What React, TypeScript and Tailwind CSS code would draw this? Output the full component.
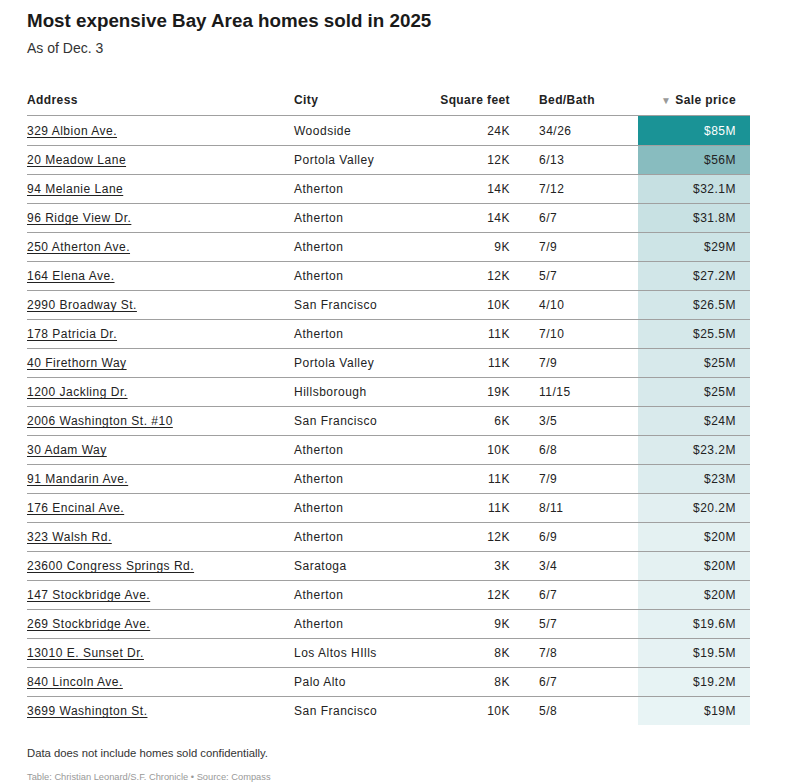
import { FC } from "react";

type Home = {
  address: string;
  city: string;
  sqft: string;
  bedBath: string;
  price: string;
  cell: string;
};

const homes: Home[] = [
  { address: "329 Albion Ave.", city: "Woodside", sqft: "24K", bedBath: "34/26", price: "$85M", cell: "bg-[#1a9396] text-white" },
  { address: "20 Meadow Lane", city: "Portola Valley", sqft: "12K", bedBath: "6/13", price: "$56M", cell: "bg-[#88bcbf]" },
  { address: "94 Melanie Lane", city: "Atherton", sqft: "14K", bedBath: "7/12", price: "$32.1M", cell: "bg-[#c6e0e2]" },
  { address: "96 Ridge View Dr.", city: "Atherton", sqft: "14K", bedBath: "6/7", price: "$31.8M", cell: "bg-[#c8e1e3]" },
  { address: "250 Atherton Ave.", city: "Atherton", sqft: "9K", bedBath: "7/9", price: "$29M", cell: "bg-[#cde4e6]" },
  { address: "164 Elena Ave.", city: "Atherton", sqft: "12K", bedBath: "5/7", price: "$27.2M", cell: "bg-[#d1e6e8]" },
  { address: "2990 Broadway St.", city: "San Francisco", sqft: "10K", bedBath: "4/10", price: "$26.5M", cell: "bg-[#d3e7e9]" },
  { address: "178 Patricia Dr.", city: "Atherton", sqft: "11K", bedBath: "7/10", price: "$25.5M", cell: "bg-[#d5e8ea]" },
  { address: "40 Firethorn Way", city: "Portola Valley", sqft: "11K", bedBath: "7/9", price: "$25M", cell: "bg-[#d7e9eb]" },
  { address: "1200 Jackling Dr.", city: "Hillsborough", sqft: "19K", bedBath: "11/15", price: "$25M", cell: "bg-[#d7e9eb]" },
  { address: "2006 Washington St. #10", city: "San Francisco", sqft: "6K", bedBath: "3/5", price: "$24M", cell: "bg-[#d9eaec]" },
  { address: "30 Adam Way", city: "Atherton", sqft: "10K", bedBath: "6/8", price: "$23.2M", cell: "bg-[#dbebed]" },
  { address: "91 Mandarin Ave.", city: "Atherton", sqft: "11K", bedBath: "7/9", price: "$23M", cell: "bg-[#dcecee]" },
  { address: "176 Encinal Ave.", city: "Atherton", sqft: "11K", bedBath: "8/11", price: "$20.2M", cell: "bg-[#e2eff1]" },
  { address: "323 Walsh Rd.", city: "Atherton", sqft: "12K", bedBath: "6/9", price: "$20M", cell: "bg-[#e4f1f2]" },
  { address: "23600 Congress Springs Rd.", city: "Saratoga", sqft: "3K", bedBath: "3/4", price: "$20M", cell: "bg-[#e4f1f2]" },
  { address: "147 Stockbridge Ave.", city: "Atherton", sqft: "12K", bedBath: "6/7", price: "$20M", cell: "bg-[#e4f1f2]" },
  { address: "269 Stockbridge Ave.", city: "Atherton", sqft: "9K", bedBath: "5/7", price: "$19.6M", cell: "bg-[#e5f2f3]" },
  { address: "13010 E. Sunset Dr.", city: "Los Altos HIlls", sqft: "8K", bedBath: "7/8", price: "$19.5M", cell: "bg-[#e6f2f3]" },
  { address: "840 Lincoln Ave.", city: "Palo Alto", sqft: "8K", bedBath: "6/7", price: "$19.2M", cell: "bg-[#e7f3f4]" },
  { address: "3699 Washington St.", city: "San Francisco", sqft: "10K", bedBath: "5/8", price: "$19M", cell: "bg-[#e8f4f5]" },
];

const cols = "grid grid-cols-[267px_146px_84px_114px_112px]";

const App: FC = () => {
  return (
    <div className="w-[786px] h-[784px] bg-white px-[27px] pt-[9px] text-[#222] font-['Liberation_Sans',Arial,sans-serif]">
      <h1 className="text-[18.8px] leading-6 font-bold text-[#1a1a1a]">
        Most expensive Bay Area homes sold in 2025
      </h1>
      <p className="mt-[5px] text-[14px] leading-5 text-[#333]">As of Dec. 3</p>

      <div className="mt-[30px] w-[723px]">
        <div className={`${cols} h-[28px] items-end pb-[6px] border-b border-[#a0a0a0] text-[12px] font-bold tracking-[0.4px] text-[#222]`}>
          <div>Address</div>
          <div>City</div>
          <div className="text-right pr-[14px]">Square feet</div>
          <div className="pl-[15px]">Bed/Bath</div>
          <div className="flex items-center justify-end gap-[4px] pr-[14px]">
            <span className="text-[10px] text-[#999]">▼</span>
            <span>Sale price</span>
          </div>
        </div>

        {homes.map((h, i) => (
          <div
            key={h.address}
            className={`${cols} h-[29px] text-[12px] tracking-[0.5px] text-[#222] ${
              i > 0 ? "border-t border-[#a0a0a0]" : ""
            }`}
          >
            <div className="flex items-center">
              <span className="underline underline-offset-2">{h.address}</span>
            </div>
            <div className="flex items-center">{h.city}</div>
            <div className="flex items-center justify-end pr-[14px] tabular-nums">{h.sqft}</div>
            <div className="flex items-center pl-[15px] tabular-nums">{h.bedBath}</div>
            <div className={`flex items-center justify-end pr-[14px] tabular-nums ${h.cell}`}>{h.price}</div>
          </div>
        ))}
      </div>

      <p className="mt-[20px] text-[11.3px] leading-4 text-[#333]">
        Data does not include homes sold confidentially.
      </p>
      <p className="mt-[10px] text-[9.3px] leading-3 text-[#999]">
        Table: Christian Leonard/S.F. Chronicle • Source: Compass
      </p>
    </div>
  );
};

export default App;
